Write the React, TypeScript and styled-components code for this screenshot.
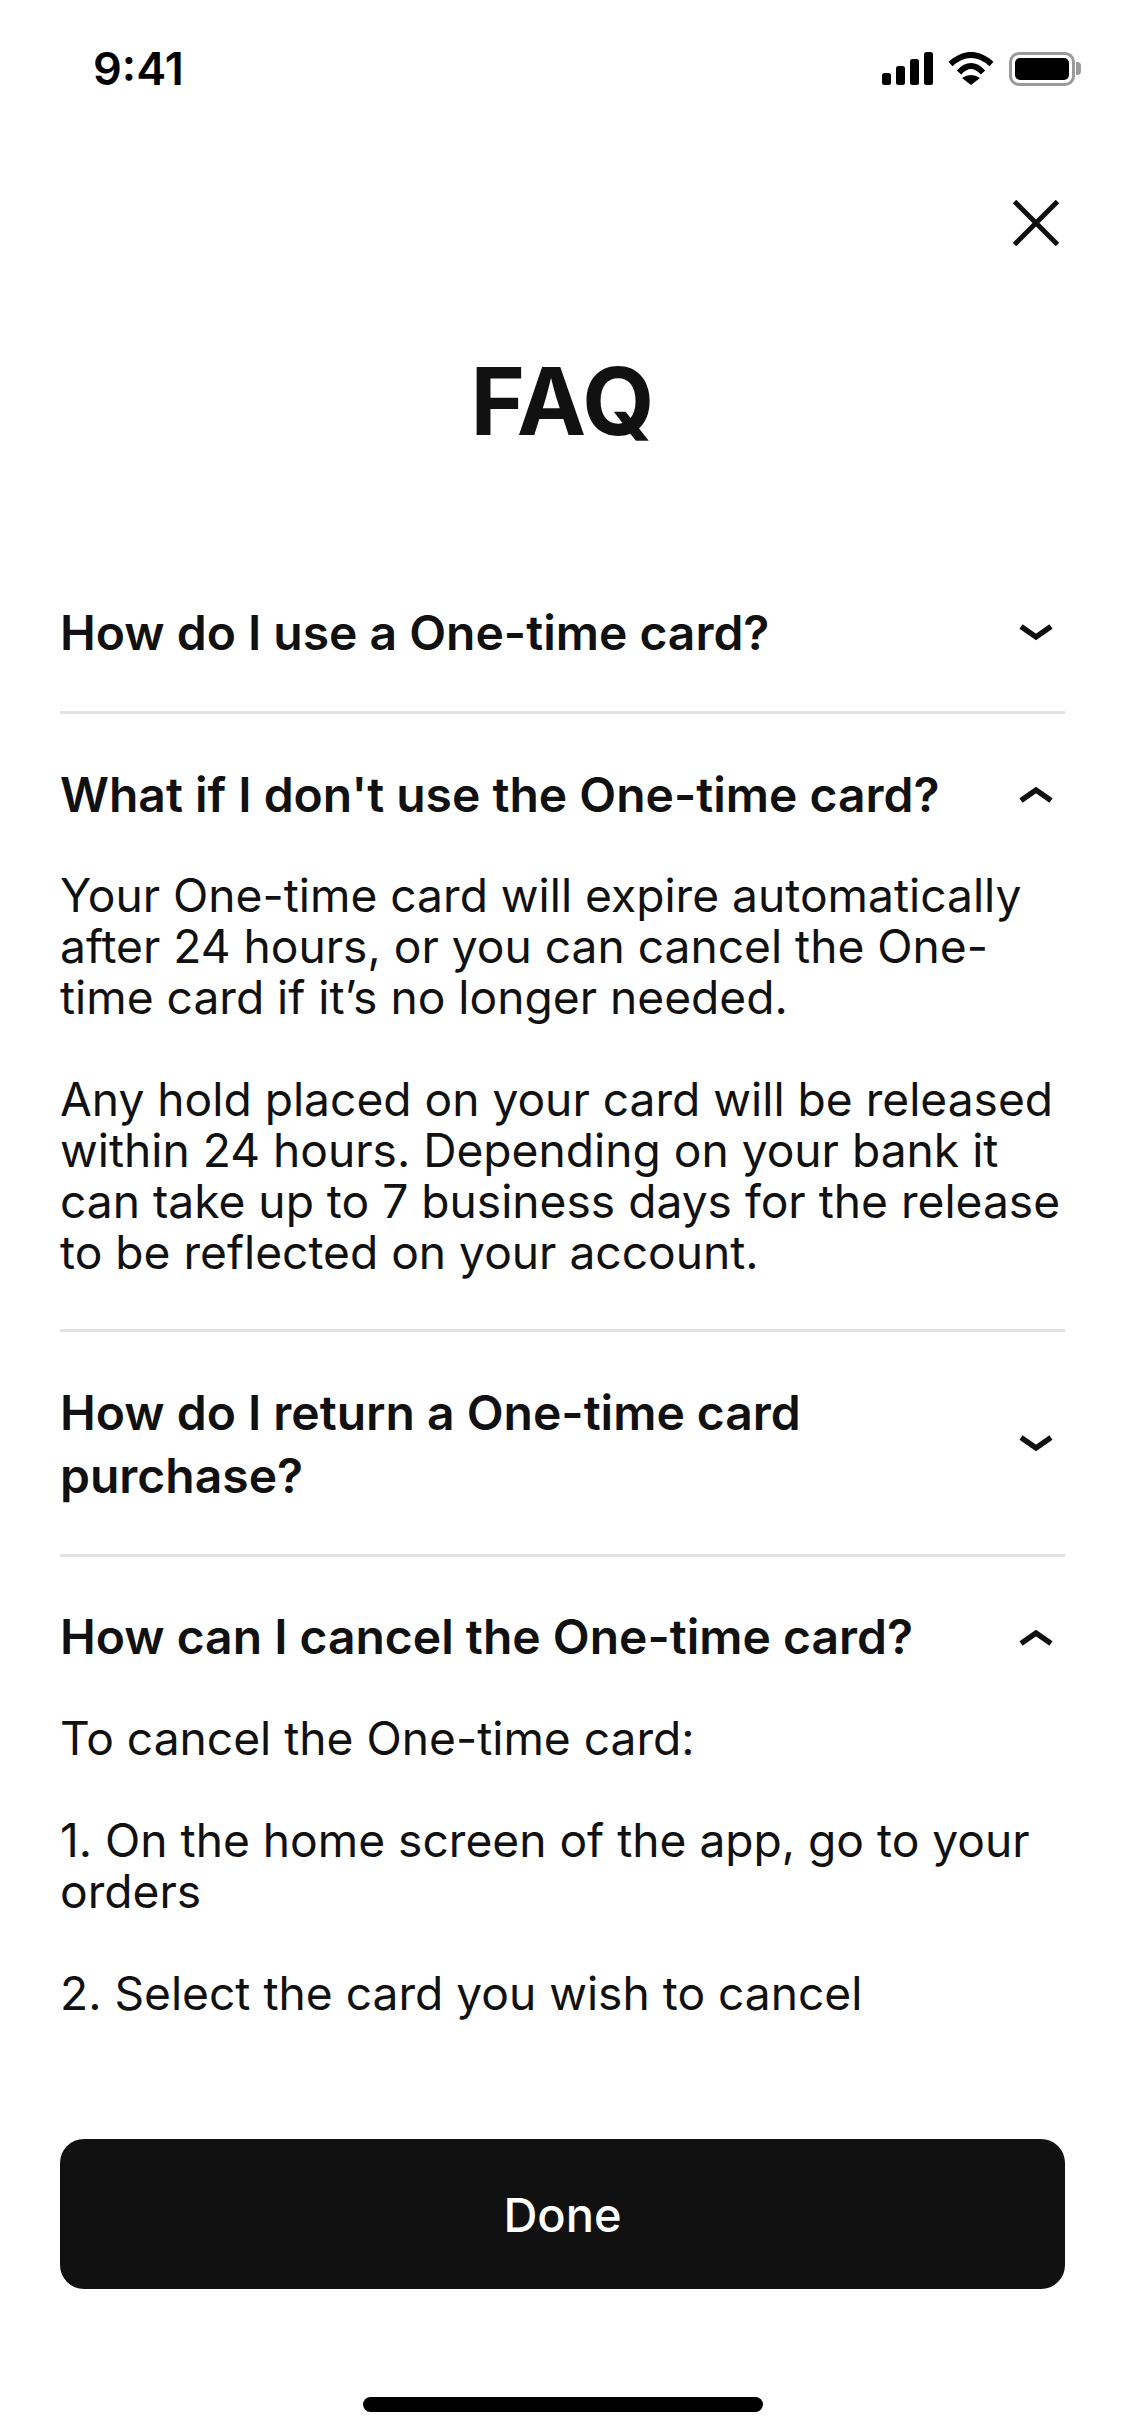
import styled, { createGlobalStyle } from 'styled-components';

const GlobalStyle = createGlobalStyle`
	* {
		box-sizing: border-box;
	}

	html,
	body {
		margin: 0;
		padding: 0;
		background: #ffffff;
	}

	body {
		font-family: Inter, 'Liberation Sans', sans-serif;
		color: #111111;
	}
`;

type FaqEntry = {
	question: string;
	open: boolean;
	paragraphs?: string[];
};

const faqs: FaqEntry[] = [
	{ question: 'How do I use a One-time card?', open: false },
	{
		question: "What if I don't use the One-time card?",
		open: true,
		paragraphs: [
			'Your One-time card will expire automatically after 24 hours, or you can cancel the One-time card if it’s no longer needed.',
			'Any hold placed on your card will be released within 24 hours. Depending on your bank it can take up to 7 business days for the release to be reflected on your account.',
		],
	},
	{ question: 'How do I return a One-time card purchase?', open: false },
	{
		question: 'How can I cancel the One-time card?',
		open: true,
		paragraphs: [
			'To cancel the One-time card:',
			'1. On the home screen of the app, go to your orders',
			'2. Select the card you wish to cancel',
		],
	},
];

const Chevron = ({ open }: { open: boolean }) => (
	<ChevronIcon viewBox="0 0 36 20" fill="none">
		<path
			d={open ? 'M3 16.5 18 6 33 16.5' : 'M3 3.5 18 14 33 3.5'}
			stroke="#111111"
			strokeWidth="5.5"
			strokeLinejoin="miter"
		/>
	</ChevronIcon>
);

const App = () => {
	return (
		<>
			<GlobalStyle />
			<Page>
				<StatusBar>
					<Clock>9:41</Clock>
					<StatusIcons>
						<svg width="51" height="33" viewBox="0 0 51 33" fill="#000000">
							<rect x="0" y="21" width="9" height="12" rx="2.5" />
							<rect x="14" y="14" width="9" height="19" rx="2.5" />
							<rect x="28" y="7" width="9" height="26" rx="2.5" />
							<rect x="42" y="0" width="9" height="33" rx="2.5" />
						</svg>
						<svg width="46" height="33" viewBox="0 0 46 33" fill="none" stroke="#000000" strokeWidth="6">
							<path d="M2.5 12Q23 -6 43.5 12" />
							<path d="M11 20.5Q23 7.5 35 20.5" />
							<path d="M23 33 14 26Q23 20 32 26Z" fill="#000000" stroke="none" />
						</svg>
						<Battery>
							<BatteryFill />
							<BatteryCap />
						</Battery>
					</StatusIcons>
				</StatusBar>

				<CloseRow>
					<svg width="46" height="46" viewBox="0 0 46 46" fill="none" stroke="#111111" strokeWidth="5">
						<path d="M1.5 1.5 44.5 44.5M44.5 1.5 1.5 44.5" />
					</svg>
				</CloseRow>

				<Title>FAQ</Title>

				<FaqList>
					{faqs.map((faq) => (
						<FaqItem key={faq.question}>
							<QuestionRow>
								<Question>{faq.question}</Question>
								<Chevron open={faq.open} />
							</QuestionRow>
							{faq.paragraphs && (
								<Answer>
									{faq.paragraphs.map((text) => (
										<p key={text}>{text}</p>
									))}
								</Answer>
							)}
						</FaqItem>
					))}
				</FaqList>

				<DoneButton>Done</DoneButton>
				<HomeIndicator />
			</Page>
		</>
	);
};

const Page = styled.div`
	display: flex;
	flex-direction: column;
	width: 1125px;
	height: 2436px;
	overflow: hidden;
	background: #ffffff;
`;

const StatusBar = styled.div`
	display: flex;
	justify-content: space-between;
	align-items: center;
	height: 33px;
	margin-top: 52px;
	padding: 0 44px 0 93px;
`;

const Clock = styled.span`
	font-size: 45px;
	font-weight: 600;
	line-height: 33px;
	color: #000000;
`;

const StatusIcons = styled.div`
	display: flex;
	align-items: center;
	gap: 15px;
`;

const Battery = styled.div`
	position: relative;
	display: flex;
	width: 66px;
	height: 34px;
	padding: 3px;
	margin-right: 6px;
	border: 3px solid #9a9a9a;
	border-radius: 10px;
`;

const BatteryFill = styled.div`
	flex: 1;
	border-radius: 5px;
	background: #000000;
`;

const BatteryCap = styled.div`
	position: absolute;
	top: 7px;
	right: -9px;
	width: 5px;
	height: 13px;
	border-radius: 0 4px 4px 0;
	background: #9a9a9a;
`;

const CloseRow = styled.div`
	display: flex;
	justify-content: flex-end;
	margin-top: 115px;
	padding-right: 66px;
`;

const Title = styled.h1`
	margin: 100px 0 0;
	font-size: 93px;
	font-weight: 700;
	line-height: 110px;
	text-align: center;
	color: #111111;
`;

const FaqList = styled.div`
	display: flex;
	flex-direction: column;
	flex: 1;
	margin-top: 145px;
	padding: 0 60px;
`;

const FaqItem = styled.div`
	padding-bottom: 47px;
	border-bottom: 3px solid #e2e2e2;

	& + & {
		padding-top: 48.5px;
	}

	&:last-child {
		border-bottom: none;
	}
`;

const QuestionRow = styled.div`
	display: flex;
	justify-content: space-between;
	align-items: center;
	gap: 40px;
`;

const Question = styled.div`
	max-width: 900px;
	font-size: 48px;
	font-weight: 600;
	line-height: 63px;
	color: #111111;
`;

const ChevronIcon = styled.svg`
	flex: none;
	width: 36px;
	height: 20px;
	margin-right: 11px;
`;

const Answer = styled.div`
	margin: 44.5px 0 4px;
	font-size: 46.15px;
	font-weight: 400;
	line-height: 51px;
	color: #111111;

	p {
		margin: 0 0 51px;
	}

	p:last-child {
		margin-bottom: 0;
	}
`;

const DoneButton = styled.button`
	flex: none;
	height: 150px;
	margin: 0 60px;
	border: none;
	border-radius: 24px;
	background: #111111;
	color: #ffffff;
	font-family: inherit;
	font-size: 47px;
	font-weight: 500;
`;

const HomeIndicator = styled.div`
	flex: none;
	align-self: center;
	width: 400px;
	height: 15px;
	margin: 108px 0 24px;
	border-radius: 8px;
	background: #000000;
`;

export default App;
